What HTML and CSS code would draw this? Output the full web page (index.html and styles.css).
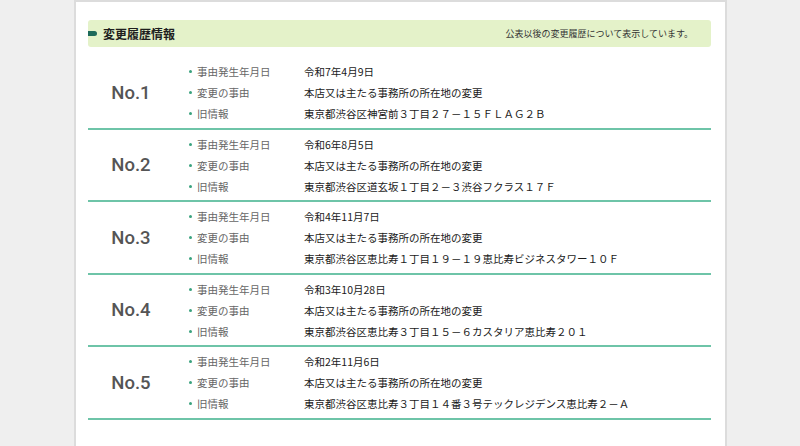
FILE: index.html
```html
<!DOCTYPE html>
<html lang="ja">
<head>
<meta charset="utf-8">
<title>変更履歴情報</title>
<link rel="stylesheet" href="styles.css">
</head>
<body>
<div class="card">
  <div class="banner">
    <h2 class="banner-title"><span class="marker"></span>変更履歴情報</h2>
    <p class="banner-note">公表以後の変更履歴について表示しています。</p>
  </div>
  <div class="list">
    <div class="entry">
      <div class="num">No.1</div>
      <dl class="fields">
        <dt>事由発生年月日</dt><dd>令和7年4月9日</dd>
        <dt>変更の事由</dt><dd>本店又は主たる事務所の所在地の変更</dd>
        <dt>旧情報</dt><dd>東京都渋谷区神宮前３丁目２７－１５ＦＬＡＧ２Ｂ</dd>
      </dl>
    </div>
    <div class="entry">
      <div class="num">No.2</div>
      <dl class="fields">
        <dt>事由発生年月日</dt><dd>令和6年8月5日</dd>
        <dt>変更の事由</dt><dd>本店又は主たる事務所の所在地の変更</dd>
        <dt>旧情報</dt><dd>東京都渋谷区道玄坂１丁目２－３渋谷フクラス１７Ｆ</dd>
      </dl>
    </div>
    <div class="entry">
      <div class="num">No.3</div>
      <dl class="fields">
        <dt>事由発生年月日</dt><dd>令和4年11月7日</dd>
        <dt>変更の事由</dt><dd>本店又は主たる事務所の所在地の変更</dd>
        <dt>旧情報</dt><dd>東京都渋谷区恵比寿１丁目１９－１９恵比寿ビジネスタワー１０Ｆ</dd>
      </dl>
    </div>
    <div class="entry">
      <div class="num">No.4</div>
      <dl class="fields">
        <dt>事由発生年月日</dt><dd>令和3年10月28日</dd>
        <dt>変更の事由</dt><dd>本店又は主たる事務所の所在地の変更</dd>
        <dt>旧情報</dt><dd>東京都渋谷区恵比寿３丁目１５－６カスタリア恵比寿２０１</dd>
      </dl>
    </div>
    <div class="entry">
      <div class="num">No.5</div>
      <dl class="fields">
        <dt>事由発生年月日</dt><dd>令和2年11月6日</dd>
        <dt>変更の事由</dt><dd>本店又は主たる事務所の所在地の変更</dd>
        <dt>旧情報</dt><dd>東京都渋谷区恵比寿３丁目１４番３号テックレジデンス恵比寿２－Ａ</dd>
      </dl>
    </div>
  </div>
</div>
</body>
</html>
```
FILE: styles.css
```css
html, body {
  margin: 0;
  padding: 0;
}
body {
  background: #efefef;
  font-family: "Noto Sans CJK JP", "Noto Sans", sans-serif;
  color: #222;
  height: 446px;
  overflow: hidden;
}
.card {
  margin: 0 73px 0 74px;
  background: #fff;
  border: 2px solid #dcdcdc;
  border-bottom: none;
  padding: 18px 14px 40px 12px;
  min-height: 446px;
  box-sizing: border-box;
}
.banner {
  display: flex;
  align-items: center;
  justify-content: space-between;
  height: 27px;
  background: #e4f2c9;
  border-radius: 3px;
  padding: 0 18px 0 0;
}
.banner-title {
  margin: 0;
  display: flex;
  align-items: center;
  font-size: 12px;
  font-weight: 700;
  color: #1e1e1e;
  line-height: 1;
}
.marker {
  display: inline-block;
  width: 9px;
  height: 5px;
  background: #1d6a5a;
  border-radius: 0 3px 3px 0;
  margin-right: 6px;
}
.banner-note {
  margin: 0;
  font-size: 9px;
  color: #333;
}
.list {
  margin-top: 10px;
}
.entry {
  display: flex;
  align-items: center;
  padding: 4px 0 3.5px;
  border-bottom: 2px solid #6ec4a8;
}
.num {
  width: 86px;
  text-align: center;
  font-family: Roboto, "Liberation Sans", Arial, sans-serif;
  font-size: 18.5px;
  font-weight: 500;
  color: #555;
}
.fields {
  margin: 0 0 0 14px;
  display: grid;
  grid-template-columns: 116px 1fr;
  font-size: 10.5px;
  line-height: 21px;
}
.fields dt {
  position: relative;
  padding-left: 9px;
  color: #666;
}
.fields dt::before {
  content: "";
  position: absolute;
  left: 1px;
  top: 9px;
  width: 3px;
  height: 3px;
  border-radius: 50%;
  background: #3aa27e;
}
.fields dd {
  margin: 0;
  color: #1a1a1a;
}
```
